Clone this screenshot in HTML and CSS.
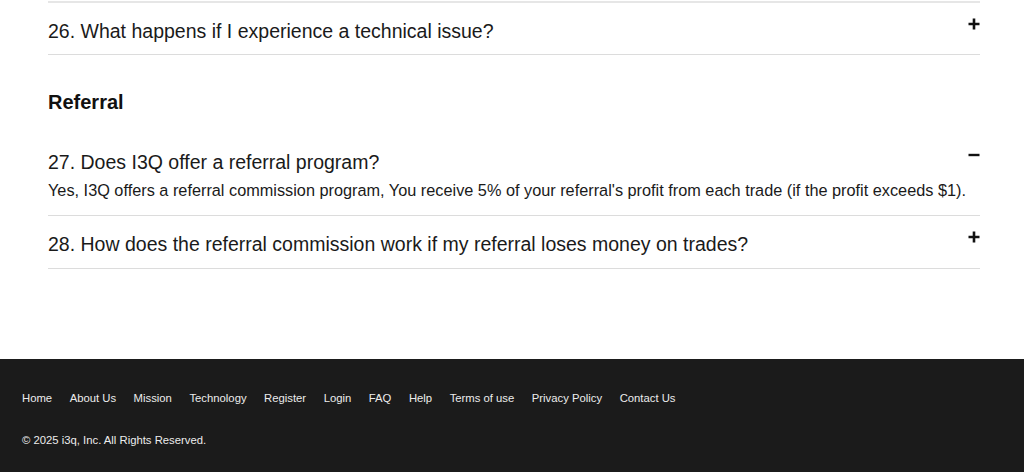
FILE: index.html
```html
<!DOCTYPE html>
<html lang="en">
<head>
<meta charset="utf-8">
<title>FAQ</title>
<link rel="stylesheet" href="styles.css">
</head>
<body>
<main class="faq">
  <div class="faq-top"></div>
  <div class="faq-item faq-item-first">
    <div class="faq-q">
      <span class="faq-q-text">26. What happens if I experience a technical issue?</span>
      <svg class="faq-icon" width="12" height="12" viewBox="0 0 12 12"><path d="M6 0.5V11.5M0.5 6H11.5" stroke="#111" stroke-width="2.6"/></svg>
    </div>
  </div>
  <h2 class="faq-section">Referral</h2>
  <div class="faq-item">
    <div class="faq-q">
      <span class="faq-q-text">27. Does I3Q offer a referral program?</span>
      <svg class="faq-icon" width="12" height="12" viewBox="0 0 12 12"><path d="M0.5 6H11.5" stroke="#111" stroke-width="2.4"/></svg>
    </div>
    <p class="faq-a">Yes, I3Q offers a referral commission program, You receive 5% of your referral's profit from each trade (if the profit exceeds $1).</p>
  </div>
  <div class="faq-item">
    <div class="faq-q">
      <span class="faq-q-text">28. How does the referral commission work if my referral loses money on trades?</span>
      <svg class="faq-icon" width="12" height="12" viewBox="0 0 12 12"><path d="M6 0.5V11.5M0.5 6H11.5" stroke="#111" stroke-width="2.6"/></svg>
    </div>
  </div>
</main>
<footer class="site-footer">
  <nav class="footer-links">
    <a href="#">Home</a>
    <a href="#">About Us</a>
    <a href="#">Mission</a>
    <a href="#">Technology</a>
    <a href="#">Register</a>
    <a href="#">Login</a>
    <a href="#">FAQ</a>
    <a href="#">Help</a>
    <a href="#">Terms of use</a>
    <a href="#">Privacy Policy</a>
    <a href="#">Contact Us</a>
  </nav>
  <p class="copyright">© 2025 i3q, Inc. All Rights Reserved.</p>
</footer>
</body>
</html>
```
FILE: styles.css
```css
html, body {
  margin: 0;
  padding: 0;
  background: #fff;
  font-family: "Liberation Sans", Arial, sans-serif;
  color: #1a1a1a;
}

.faq {
  width: 932px;
  margin-left: 48px;
  padding-top: 1px;
  height: 359px;
  box-sizing: border-box;
}

.faq-top {
  border-top: 2px solid #e6e6e6;
}

.faq-item {
  border-bottom: 1px solid #dcdcdc;
  padding: 16px 0 12px;
}

.faq-item-first {
  padding-bottom: 11px;
}

.faq-q {
  display: flex;
  justify-content: space-between;
  align-items: flex-start;
}

.faq-q-text {
  font-size: 19.5px;
  line-height: 24px;
}

.faq-icon {
  margin-top: -1px;
  flex: none;
}

.faq-a {
  margin: 4px 0 1px;
  font-size: 16.3px;
  line-height: 24px;
}

.faq-section {
  margin: 35px 0 20px;
  font-size: 20px;
  line-height: 24px;
  font-weight: bold;
  color: #111;
}

.site-footer {
  background: #1b1b1b;
  height: 113px;
  padding: 32px 22px 0;
  box-sizing: border-box;
}

.footer-links {
  display: flex;
  gap: 17.5px;
  font-size: 11.3px;
  line-height: 14px;
}

.footer-links a {
  color: #ececec;
  text-decoration: none;
}

.copyright {
  margin: 28px 0 0;
  font-size: 11.3px;
  line-height: 14px;
  color: #ececec;
}
```
